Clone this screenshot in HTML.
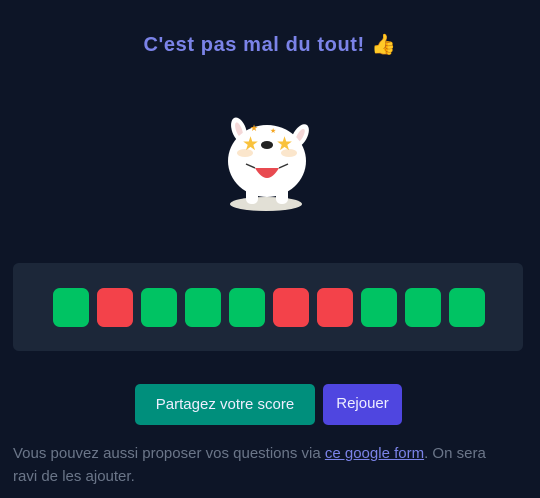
<!DOCTYPE html>
<html><head><meta charset="utf-8"><style>
*{margin:0;padding:0;box-sizing:border-box}
body{width:540px;height:498px;background:#0d1527;font-family:"Liberation Sans",sans-serif;position:relative;overflow:hidden}
.t{position:absolute;left:0;width:540px;top:32px;text-align:center;color:#7b83e8;font-weight:bold;font-size:20px;letter-spacing:0.6px}
.panel{position:absolute;left:13px;top:263px;width:510px;height:88px;background:#1c2739;border-radius:6px}
.sq{position:absolute;top:25px;width:36px;height:39px;border-radius:7px;background:#00c363}
.r{background:#f3424a}
.b{position:absolute;top:384px;height:41px;border-radius:5px;color:#eef;font-size:15px;text-align:center;line-height:41px}
.p{position:absolute;left:13px;top:442px;width:500px;font-size:15px;line-height:23px;color:#6b7689}
.p a{color:#7b83e8;text-decoration:underline}
</style></head><body>
<div class="t">C'est pas mal du tout! <span style="color:#f5a623">👍</span></div>
<svg style="position:absolute;left:222px;top:108px" width="96" height="106" viewBox="0 0 96 106">
<ellipse cx="44" cy="96" rx="36" ry="7" fill="#e2e0d6"/>
<ellipse cx="17" cy="22" rx="7" ry="13" fill="#fff" transform="rotate(-20 17 22)"/>
<ellipse cx="17" cy="22" rx="3" ry="8" fill="#f4d8d8" transform="rotate(-20 17 22)"/>
<ellipse cx="78" cy="28" rx="7" ry="13" fill="#fff" transform="rotate(30 78 28)"/>
<ellipse cx="78" cy="28" rx="3" ry="8" fill="#f4d8d8" transform="rotate(30 78 28)"/>
<rect x="24" y="78" width="12" height="18" rx="5" fill="#fff"/>
<rect x="54" y="78" width="12" height="18" rx="5" fill="#fff"/>
<ellipse cx="45" cy="53" rx="39" ry="36" fill="#fff"/>
<ellipse cx="23" cy="45" rx="8" ry="4" fill="#fbe6cc"/>
<ellipse cx="67" cy="45" rx="8" ry="4" fill="#fbe6cc"/>
<text x="20" y="42" font-size="19" fill="#f9c23c">★</text>
<text x="54" y="42" font-size="19" fill="#f9c23c">★</text>
<text x="28" y="23" font-size="9" fill="#f5a623">★</text>
<text x="48" y="25" font-size="7" fill="#f5a623">★</text>
<ellipse cx="45" cy="37" rx="6" ry="4" fill="#222"/>
<path d="M24 56 L33 60 M66 56 L57 60" stroke="#333" stroke-width="1.5"/>
<path d="M33 60 Q45 80 57 60 Z" fill="#e84a50"/>
</svg>
<div class="panel">
<div class="sq" style="left:40px"></div><div class="sq r" style="left:84px"></div><div class="sq" style="left:128px"></div><div class="sq" style="left:172px"></div><div class="sq" style="left:216px"></div><div class="sq r" style="left:260px"></div><div class="sq r" style="left:304px"></div><div class="sq" style="left:348px"></div><div class="sq" style="left:392px"></div><div class="sq" style="left:436px"></div>
</div>
<div class="b" style="left:135px;width:180px;background:#008f7c">Partagez votre score</div>
<div class="b" style="left:323px;width:79px;background:#4f46e0;line-height:40px">Rejouer</div>
<div class="p">Vous pouvez aussi proposer vos questions via <a>ce google form</a>. On sera ravi de les ajouter.</div>
</body></html>
